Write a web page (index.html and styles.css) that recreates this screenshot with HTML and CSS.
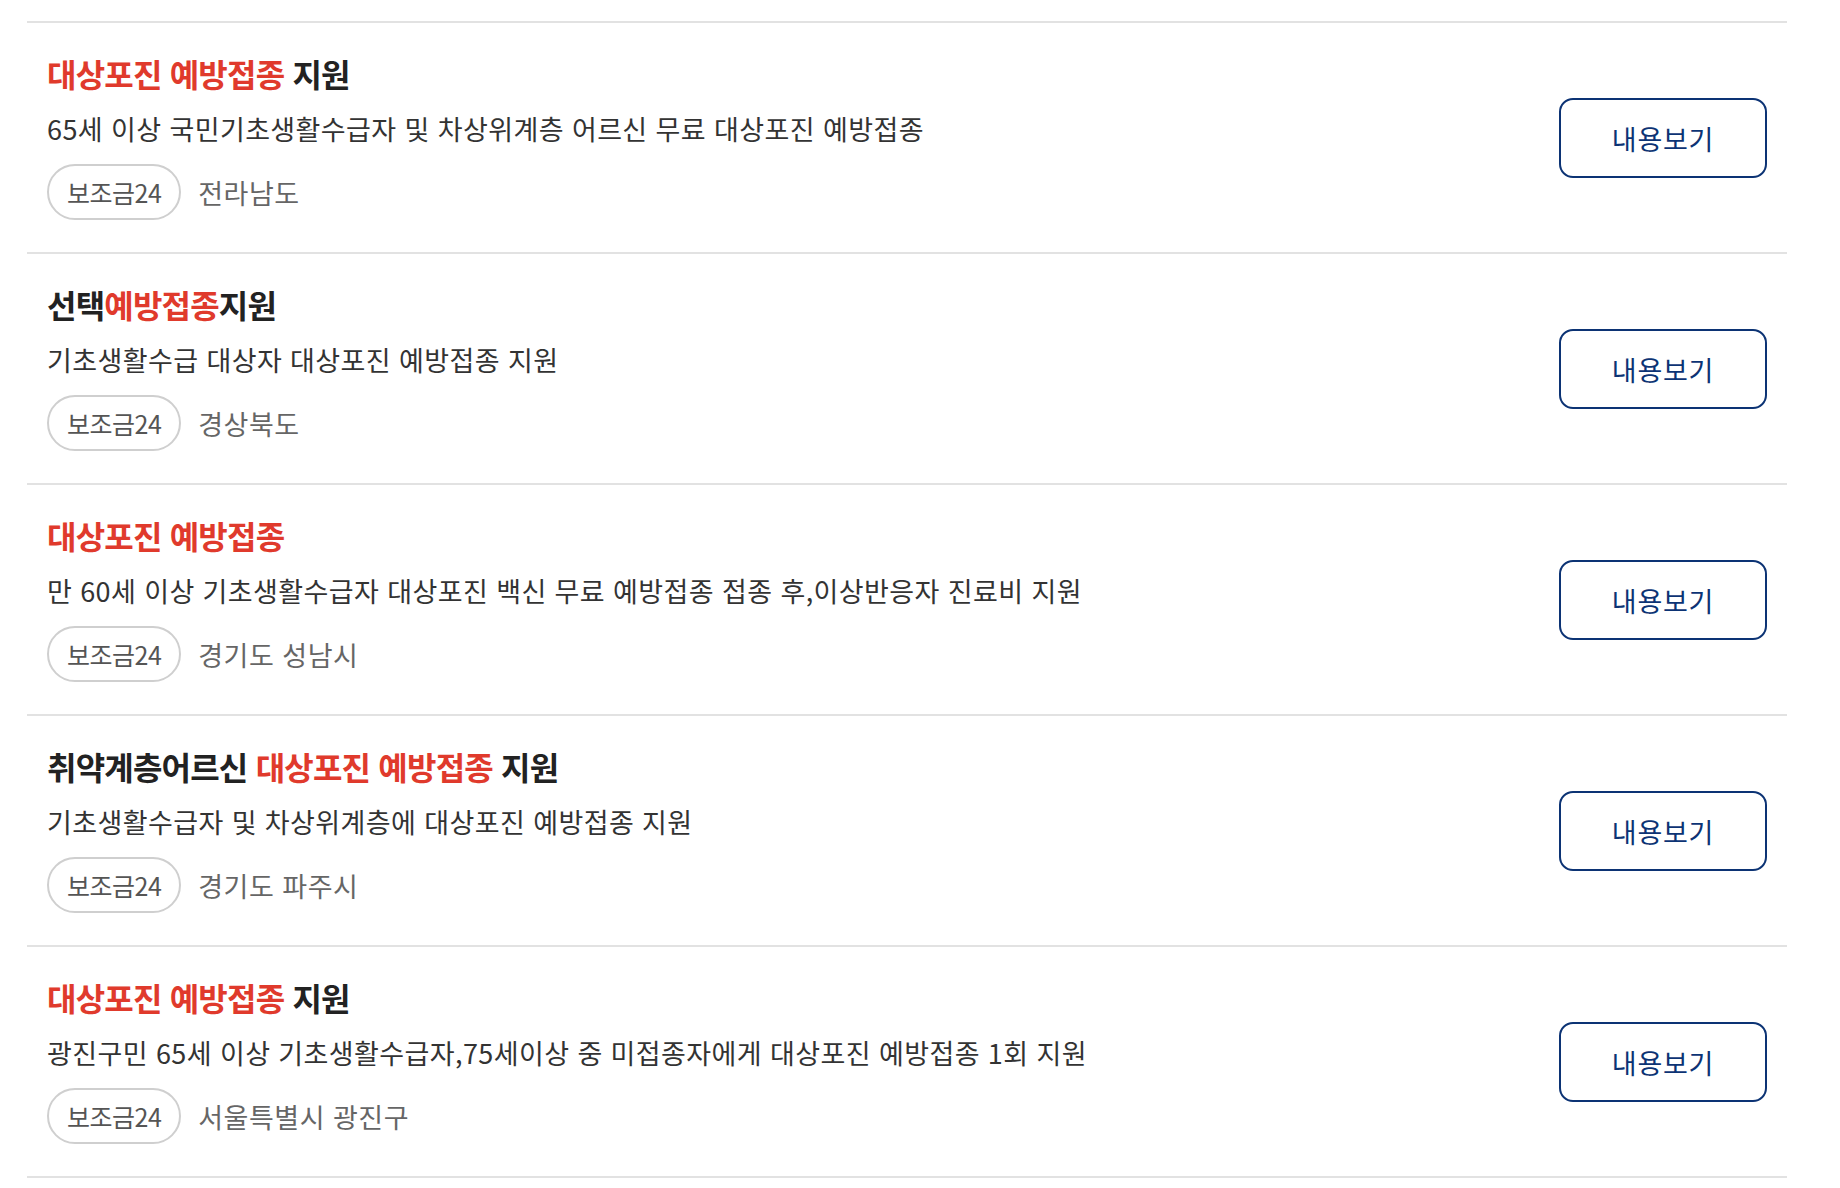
FILE: index.html
```html
<!DOCTYPE html>
<html lang="ko">
  <head>
    <meta charset="UTF-8" />
    <meta name="viewport" content="width=device-width, initial-scale=1.0" />
    <title>대상포진 예방접종 지원 검색결과</title>
    <link rel="stylesheet" href="styles.css">
  </head>
  <body>
    <ul class="service-list">
      <li class="service-item">
        <div class="service-info">
          <h3 class="service-title"><em>대상포진 예방접종</em> 지원</h3>
          <p class="service-desc">65세 이상 국민기초생활수급자 및 차상위계층 어르신 무료 대상포진 예방접종</p>
          <div class="service-meta">
            <span class="tag">보조금24</span>
            <span class="region">전라남도</span>
          </div>
        </div>
        <a href="#" class="btn-view">내용보기</a>
      </li>
      <li class="service-item">
        <div class="service-info">
          <h3 class="service-title">선택<em>예방접종</em>지원</h3>
          <p class="service-desc">기초생활수급 대상자 대상포진 예방접종 지원</p>
          <div class="service-meta">
            <span class="tag">보조금24</span>
            <span class="region">경상북도</span>
          </div>
        </div>
        <a href="#" class="btn-view">내용보기</a>
      </li>
      <li class="service-item">
        <div class="service-info">
          <h3 class="service-title"><em>대상포진 예방접종</em></h3>
          <p class="service-desc">만 60세 이상 기초생활수급자 대상포진 백신 무료 예방접종 접종 후,이상반응자 진료비 지원</p>
          <div class="service-meta">
            <span class="tag">보조금24</span>
            <span class="region">경기도 성남시</span>
          </div>
        </div>
        <a href="#" class="btn-view">내용보기</a>
      </li>
      <li class="service-item">
        <div class="service-info">
          <h3 class="service-title">취약계층어르신 <em>대상포진 예방접종</em> 지원</h3>
          <p class="service-desc">기초생활수급자 및 차상위계층에 대상포진 예방접종 지원</p>
          <div class="service-meta">
            <span class="tag">보조금24</span>
            <span class="region">경기도 파주시</span>
          </div>
        </div>
        <a href="#" class="btn-view">내용보기</a>
      </li>
      <li class="service-item">
        <div class="service-info">
          <h3 class="service-title"><em>대상포진 예방접종</em> 지원</h3>
          <p class="service-desc">광진구민 65세 이상 기초생활수급자,75세이상 중 미접종자에게 대상포진 예방접종 1회 지원</p>
          <div class="service-meta">
            <span class="tag">보조금24</span>
            <span class="region">서울특별시 광진구</span>
          </div>
        </div>
        <a href="#" class="btn-view">내용보기</a>
      </li>
    </ul>
  </body>
</html>
```

FILE: styles.css
```css
body {
  margin: 0;
  padding: 0;
  background: #fff;
  font-family: "Noto Sans CJK KR", "Noto Sans", sans-serif;
  color: #222;
}

.service-list {
  list-style: none;
  margin: 21px 53px 0 27px;
  padding: 0;
  border-top: 2px solid #e2e2e2;
}

.service-item {
  display: flex;
  align-items: center;
  justify-content: space-between;
  padding: 28px 20px 32px 20px;
  border-bottom: 2px solid #e2e2e2;
}

.service-title {
  margin: 0;
  font-size: 32px;
  line-height: 44px;
  font-weight: 700;
  letter-spacing: -0.8px;
  color: #222;
}

.service-title em {
  font-style: normal;
  color: #e03a2c;
}

.service-desc {
  margin: 15px 0 0;
  font-size: 27px;
  line-height: 38px;
  letter-spacing: 0.4px;
  color: #333;
}

.service-meta {
  display: flex;
  align-items: center;
  gap: 17px;
  margin-top: 16px;
}

.tag {
  display: inline-flex;
  align-items: center;
  box-sizing: border-box;
  height: 56px;
  padding: 0 18px;
  border: 2px solid #cfcfcf;
  border-radius: 28px;
  font-size: 25px;
  letter-spacing: -0.5px;
  color: #555;
}

.region {
  font-size: 27px;
  letter-spacing: 0.5px;
  color: #666;
}

/* 내용보기 버튼 */
.btn-view {
  display: flex;
  align-items: center;
  justify-content: center;
  box-sizing: border-box;
  width: 208px;
  height: 80px;
  margin-top: 5px;
  flex-shrink: 0;
  border: 2px solid #0c3374;
  border-radius: 14px;
  font-size: 27px;
  letter-spacing: 0.75px;
  color: #0c3374;
  text-decoration: none;
}
```
